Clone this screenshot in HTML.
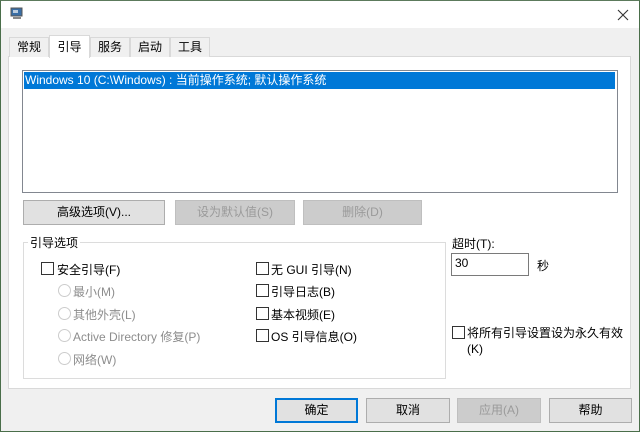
<!DOCTYPE html>
<html><head><meta charset="utf-8"><style>
*{margin:0;padding:0;box-sizing:border-box}
body{width:640px;height:432px;overflow:hidden;font-family:"Liberation Sans","Noto Sans CJK SC",sans-serif;font-size:12px;color:#000;background:#f0f0f0;position:relative}
.a{position:absolute}
.frame{left:0;top:0;width:640px;height:432px;border:1px solid #4a6e4a;border-top-color:#5c7a5c}
.btn{position:absolute;height:25px;background:#e1e1e1;border:1px solid #adadad;text-align:center;line-height:23px}
.dis{background:#cccccc;border-color:#bfbfbf;color:#9a9a9a}
.cb{position:absolute;width:13px;height:13px;border:1px solid #333;background:#fff}
.rd{position:absolute;width:13px;height:13px;border:1px solid #ccc;border-radius:50%;background:#fff}
.g{color:#8d8d8d}
.tab{position:absolute;top:37px;height:20px;background:#f0f0f0;border:1px solid #d9d9d9;border-bottom:none;text-align:center;line-height:18px}
</style></head><body>
<div class="a" style="left:0;top:0;width:640px;height:28px;background:#fff"></div>
<svg class="a" style="left:10px;top:7px" width="14" height="14" viewBox="0 0 14 14"><rect x="1" y="1" width="11" height="8" fill="#3a6ea5" stroke="#555" stroke-width="1"/><rect x="3" y="3" width="5" height="3" fill="#bcd"/><rect x="3" y="10" width="8" height="2" fill="#888"/></svg>
<svg class="a" style="left:177px;top:0" width="1" height="1"></svg>
<svg class="a" style="left:617px;top:9px" width="12" height="12" viewBox="0 0 12 12"><path d="M1 1L11 11M11 1L1 11" stroke="#333" stroke-width="1.1"/></svg>
<div class="a" style="left:8px;top:56px;width:623px;height:333px;background:#fff;border:1px solid #d9d9d9"></div>
<div class="tab" style="left:9px;width:40px">常规</div>
<div class="tab" style="left:49px;top:35px;height:23px;width:41px;background:#fff;line-height:22px;z-index:2">引导</div>
<div class="tab" style="left:90px;width:40px">服务</div>
<div class="tab" style="left:130px;width:40px">启动</div>
<div class="tab" style="left:170px;width:40px">工具</div>
<div class="a" style="left:22px;top:70px;width:596px;height:123px;border:1px solid #828790;background:#fff"></div>
<div class="a" style="left:24px;top:72px;width:591px;height:17px;background:#0078d7;color:#fff;line-height:17px;padding-left:1px">Windows 10 (C:\Windows) : 当前操作系统; 默认操作系统</div>
<div class="btn" style="left:23px;top:200px;width:142px">高级选项(V)...</div>
<div class="btn dis" style="left:175px;top:200px;width:120px">设为默认值(S)</div>
<div class="btn dis" style="left:303px;top:200px;width:119px">删除(D)</div>
<div class="a" style="left:23px;top:242px;width:423px;height:137px;border:1px solid #dcdcdc"></div>
<div class="a" style="left:28px;top:234px;background:#fff;padding:0 2px">引导选项</div>
<div class="cb" style="left:41px;top:262px"></div><div class="a" style="left:57px;top:261px">安全引导(F)</div>
<div class="rd" style="left:58px;top:284px"></div><div class="a g" style="left:73px;top:283px">最小(M)</div>
<div class="rd" style="left:58px;top:307px"></div><div class="a g" style="left:73px;top:306px">其他外壳(L)</div>
<div class="rd" style="left:58px;top:329px"></div><div class="a g" style="left:73px;top:328px">Active Directory 修复(P)</div>
<div class="rd" style="left:58px;top:352px"></div><div class="a g" style="left:73px;top:351px">网络(W)</div>
<div class="cb" style="left:256px;top:262px"></div><div class="a" style="left:271px;top:261px">无 GUI 引导(N)</div>
<div class="cb" style="left:256px;top:284px"></div><div class="a" style="left:271px;top:283px">引导日志(B)</div>
<div class="cb" style="left:256px;top:307px"></div><div class="a" style="left:271px;top:306px">基本视频(E)</div>
<div class="cb" style="left:256px;top:329px"></div><div class="a" style="left:271px;top:328px">OS 引导信息(O)</div>
<div class="a" style="left:452px;top:235px">超时(T):</div>
<div class="a" style="left:451px;top:253px;width:78px;height:23px;border:1px solid #7a7a7a;background:#fff;padding:2px 0 0 3px">30</div>
<div class="a" style="left:537px;top:257px">秒</div>
<div class="cb" style="left:452px;top:326px"></div>
<div class="a" style="left:467px;top:325px;line-height:16px">将所有引导设置设为永久有效<br>(K)</div>
<div class="btn" style="left:275px;top:398px;width:83px;border:1px solid #0078d7;box-shadow:inset 0 0 0 1px #0078d7">确定</div>
<div class="btn" style="left:366px;top:398px;width:84px">取消</div>
<div class="btn dis" style="left:457px;top:398px;width:84px">应用(A)</div>
<div class="btn" style="left:549px;top:398px;width:83px">帮助</div>
<div class="a frame"></div>
</body></html>
